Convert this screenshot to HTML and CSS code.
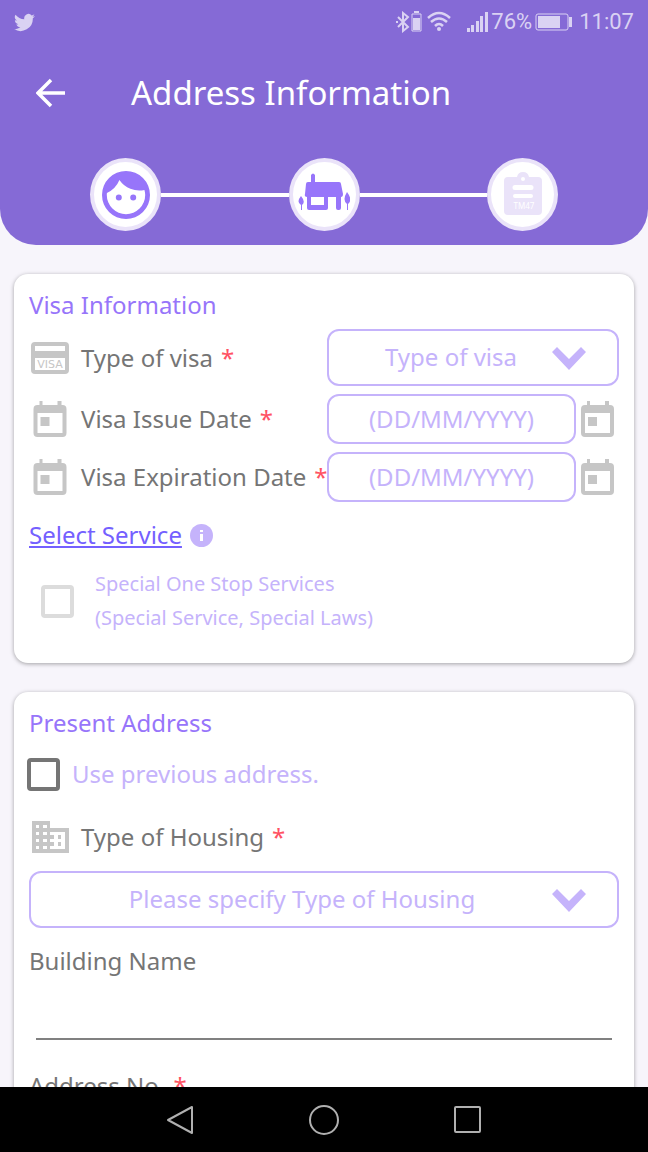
FILE: index.html
```html
<!DOCTYPE html>
<html lang="en">

<head>
    <meta charset="utf-8">
    <meta name="viewport" content="width=device-width, initial-scale=1">
    <title>Address Information</title>
    <link rel="stylesheet" href="styles.css">
</head>
<body>
    <!-- shared icons -->
    <svg class="sprite">
        <symbol id="calendar" viewBox="0 0 33 36">
            <path fill-rule="evenodd" d="M6 0h3v4h15V0h4v4h1q4 0 4 4v24q0 4-4 4H4q-4 0-4-4V8q0-4 4-4h2zM4 12v20h25V12zM7 16h9v9H7z"/>
        </symbol>
        <symbol id="arrow" viewBox="0 0 34 23">
            <path d="M5 0l12 12L29 0l5 5-17 18L0 5z"/>
        </symbol>
    </svg>

    <div class="screen">
        <header class="header">
            <div class="status">
                <svg class="twitter" viewBox="0 0 24 24"><path d="M24 4.6a10 10 0 0 1-2.8.8 5 5 0 0 0 2.1-2.7 10 10 0 0 1-3.1 1.2 4.9 4.9 0 0 0-8.4 4.5A14 14 0 0 1 1.700 3.200a4.900 4.900 0 0 0 1.500 6.500 4.900 4.900 0 0 1-2.200-.6 4.900 4.900 0 0 0 3.900 4.900 5 5 0 0 1-2.200.1 4.900 4.900 0 0 0 4.600 3.400A9.900 9.900 0 0 1 0 19.500a14 14 0 0 0 21.500-12.400A10 10 0 0 0 24 4.600z"/></svg>
                <div class="status-right">
                    <svg width="72" height="22" viewBox="0 0 72 22">
                        <g fill="none" stroke="currentColor" stroke-width="2">
                            <path d="M3 6l10 10-5 4V2l5 4L3 16"/>
                            <path d="M17 3h9v17h-9z" stroke-width="1"/>
                            <path d="M33 7q11-10 22 0M36 11q8-7 16 0M40 15q4-4 8 0" stroke-width="2.500"/>
                        </g>
                        <path d="M19 0h5v2h-5zM18 7h7v12h-7zM1 10h2v2H1z"/>
                        <circle cx="44" cy="18" r="2"/>
                    </svg>
                    <svg width="21" height="22" viewBox="0 0 21 22"><path d="M0 17h3v4H0zM4 14h3v7H4zM9 10h3v11H9zM13 5h3v16h-3zM18 1h3v20h-3z"/></svg>
                    <span class="percent">76%</span>
                    <svg class="battery" width="38" height="18" viewBox="0 0 38 18">
                        <rect x="1" y="1" width="32" height="16" rx="2" fill="none" stroke="currentColor"/>
                        <path d="M3 3h22v12H3zM34 4h3v10h-3z"/>
                    </svg>
                    <span>11:07</span>
                </div>
            </div>
            <div class="toolbar">
                <button class="back" aria-label="Back">
                    <svg width="30" height="30" viewBox="0 0 30 30"><path d="M29 15H3M15 2L2 15l13 13" fill="none" stroke="#fff" stroke-width="3.500"/></svg>
                </button>
                <h1>Address Information</h1>
            </div>
            <div class="steps">
                <div class="step">
                    <svg width="48" height="48" viewBox="2 2 20 20"><path d="M9 11.750a1.250 1.250 0 1 0 0 2.500 1.250 1.250 0 0 0 0-2.500zm6 0a1.250 1.250 0 1 0 0 2.500 1.250 1.250 0 0 0 0-2.500zM12 2a10 10 0 1 0 0 20 10 10 0 0 0 0-20zm0 18a8 8 0 0 1-8-8c0-.290.020-.580.050-.860a10.050 10.050 0 0 0 5.210-5.370A9.990 9.990 0 0 0 19.670 9.890c.210.670.330 1.370.330 2.110a8 8 0 0 1-8 8z"/></svg>
                </div>
                <div class="line"></div>
                <div class="step">
                    <svg width="52" height="43" viewBox="0 0 52 43">
                        <path fill-rule="evenodd" d="M13 2q2-3 4 0v7h24q2 0 2 2l2 10q0 3-2 3v11q0 2-2 2h-1q-2 0-2-2V24h-8v11q0 2-2 2H11q-2 0-2-2V24q-3 0-2-3l1-10q0-2 2-2h3zM13 24v8h13v-8z"/>
                        <path d="M3 23q5 6 1 9v5H3v-5q-5-3 0-9zM49 19q6 8 1 12v6h-1v-6q-5-4 0-12z"/>
                    </svg>
                </div>
                <div class="line"></div>
                <div class="step">
                    <svg class="tm" width="38" height="46" viewBox="0 0 38 46">
                        <path fill-rule="evenodd" d="M4 5h9q1-5 6-5t6 5h9q4 0 4 4v30q0 4-4 4H4q-4 0-4-4V9q0-4 4-4zM19 5a2 2 0 1 0 0 4 2 2 0 0 0 0-4zM11 13a2 2 0 0 0 0 5h16a2 2 0 0 0 0-5zM11 22a2 2 0 0 0 0 4h16a2 2 0 0 0 0-4z"/>
                        <text x="20" y="37" text-anchor="middle">TM47</text>
                    </svg>
                </div>
            </div>
        </header>

        <form class="content">
            <section class="card">
                <h2>Visa Information</h2>
                <div class="rows">
                    <div class="row">
                        <label for="visaType">
                            <svg class="icon" viewBox="-2 -2 42 36">
                                <path fill-rule="evenodd" d="M4 0h30q4 0 4 4v24q0 4-4 4H4q-4 0-4-4V4q0-4 4-4zM4 4v5h30V4zM4 16v12h30V16z"/>
                                <text x="19" y="26" text-anchor="middle">VISA</text>
                            </svg>
                            Type of visa <b>*</b>
                        </label>
                        <div class="select">
                            <select id="visaType"><option>Type of visa</option></select>
                            <svg><use href="#arrow"/></svg>
                        </div>
                    </div>
                    <div class="row">
                        <label for="issueDate"><svg class="icon"><use href="#calendar"/></svg>Visa Issue Date <b>*</b></label>
                        <div class="date">
                            <input type="text" id="issueDate" placeholder="(DD/MM/YYYY)">
                            <button type="button" aria-label="Pick issue date"><svg><use href="#calendar"/></svg></button>
                        </div>
                    </div>
                    <div class="row">
                        <label for="expDate"><svg class="icon"><use href="#calendar"/></svg>Visa Expiration Date <b>*</b></label>
                        <div class="date">
                            <input type="text" id="expDate" placeholder="(DD/MM/YYYY)">
                            <button type="button" aria-label="Pick expiration date"><svg><use href="#calendar"/></svg></button>
                        </div>
                    </div>
                </div>
                <div class="service">
                    <a href="#">Select Service</a>
                    <svg width="23" height="23" viewBox="0 0 23 23">
                        <circle cx="11.500" cy="11.500" r="11.500"/>
                        <path d="M10 6h3v2h-3zM10 10h3v7h-3z" fill="#fff"/>
                    </svg>
                </div>
                <label class="check special">
                    <input type="checkbox" disabled>
                    <span>Special One Stop Services<br>(Special Service, Special Laws)</span>
                </label>
            </section>

            <section class="card">
                <h2>Present Address</h2>
                <label class="check">
                    <input type="checkbox">
                    <span>Use previous address.</span>
                </label>
                <label class="housing" for="housing">
                    <svg class="icon" viewBox="-3 -2 42 36"><path fill-rule="evenodd" d="M0 0h18v7h19v25H0zM4 4v3h3V4zM11 4v3h4V4zM4 11v3h3v-3zM11 11v3h4v-3zM4 18v3h3v-3zM11 18v3h4v-3zM4 25v3h3v-3zM11 25v3h4v-3zM18 11v3h4v4h-4v3h4v4h-4v3h15V11zM26 14h3v4h-3zM26 21h3v4h-3z"/></svg>
                    Type of Housing <b>*</b>
                </label>
                <div class="select">
                    <select id="housing"><option>Please specify Type of Housing</option></select>
                    <svg><use href="#arrow"/></svg>
                </div>
                <label class="field" for="building">Building Name</label>
                <input class="line-input" type="text" id="building">
                <label class="field" for="addressNo">Address No. <b>*</b></label>
                <input class="line-input" type="text" id="addressNo">
            </section>
        </form>

        <nav class="navbar">
            <button aria-label="Back"><svg viewBox="0 0 30 30"><path d="M27 2v26L3 15z"/></svg></button>
            <button aria-label="Home"><svg viewBox="0 0 30 30"><circle cx="15" cy="15" r="14"/></svg></button>
            <button aria-label="Recent apps"><svg viewBox="0 0 30 30"><rect x="2" y="2" width="25" height="25" rx="1"/></svg></button>
        </nav>
    </div>
</body>

</html>
```
FILE: styles.css
```css
* {
    box-sizing: border-box;
}
body {
    margin: 0;
    background: #f7f5fb;
    color: #757575;
    font-family: "Noto Sans", sans-serif;
    font-size: 24px;
    line-height: 34px;
}
h1,
h2 {
    margin: 0;
    font-weight: normal;
}
button {
    padding: 0;
    border: 0;
    background: none;
}
svg {
    display: block;
    flex: none;
    fill: currentColor;
}
.sprite {
    position: absolute;
    width: 0;
    height: 0;
}
.screen {
    display: flex;
    flex-direction: column;
    height: 100vh;
}

/* header */
.header {
    flex: none;
    padding-bottom: 14px;
    background: #856ad6;
    border-radius: 0 0 36px 36px;
    color: #fff;
}
.status {
    display: flex;
    justify-content: space-between;
    align-items: center;
    height: 44px;
    padding: 0 14px;
    color: #dad2f3;
    font-family: Roboto, sans-serif;
    font-size: 22px;
}
.twitter {
    width: 21px;
    height: 21px;
}
.status-right {
    display: flex;
    align-items: center;
}
.percent {
    margin: 0 3px;
}
.battery {
    margin-right: 6px;
}
.toolbar {
    display: flex;
    align-items: center;
    gap: 65px;
    height: 98px;
    padding-left: 36px;
}
h1 {
    font-size: 33px;
}
.steps {
    display: flex;
    align-items: center;
    padding: 16px 90px 0;
}
.step {
    display: flex;
    justify-content: center;
    align-items: center;
    width: 71px;
    height: 73px;
    background: #fff;
    border: 4px solid #eae3f9;
    border-radius: 50%;
    color: #9775fa;
}
.line {
    flex: 1;
    height: 4px;
    background: #fff;
}
.tm {
    color: #eae3f9;
}
.tm text {
    fill: #fff;
    font-size: 8px;
}

/* cards */
.content {
    flex: 1;
    min-height: 0;
    overflow: hidden;
    padding: 29px 14px 0;
}
.card {
    margin-bottom: 29px;
    padding: 14px 15px 28px;
    background: #fff;
    border-radius: 14px;
    box-shadow: 0 1px 4px rgba(0, 0, 0, 0.35);
}
h2 {
    color: #9775fa;
    font-size: 24px;
}
b {
    margin-left: 2px;
    color: #ff5263;
    font-weight: normal;
}
.rows {
    display: grid;
    gap: 8px;
    margin-top: 7px;
}
.row {
    display: grid;
    grid-template-columns: minmax(0, 1fr) 292px;
    align-items: center;
}
.row label,
.housing {
    display: flex;
    align-items: center;
    gap: 6px;
    white-space: nowrap;
}
.icon {
    width: 42px;
    height: 36px;
    margin-right: 4px;
    color: #c6c6c6;
}
.icon text {
    font-family: "DejaVu Sans", sans-serif;
    font-size: 11px;
}
.select {
    position: relative;
}
.select svg {
    position: absolute;
    top: 18px;
    right: 33px;
    width: 34px;
    height: 23px;
    color: #c5b3fb;
    pointer-events: none;
}
select,
.date input {
    width: 100%;
    height: 57px;
    padding: 0 44px 2px 0;
    border: 2px solid #c5b3fb;
    border-radius: 12px;
    background: #fff;
    color: #c5b3fb;
    font: inherit;
    text-align: center;
    text-align-last: center;
    appearance: none;
}
.date {
    display: flex;
    align-items: center;
    gap: 5px;
    padding-right: 5px;
}
.date input {
    flex: 1;
    min-width: 0;
    height: 50px;
    padding: 0 0 2px;
}
.date input::placeholder {
    color: #c5b3fb;
}
.date svg {
    width: 33px;
    height: 36px;
    color: #c6c6c6;
}
.service {
    display: flex;
    align-items: center;
    gap: 8px;
    margin-top: 16px;
    color: #c5b3fb;
}
.service a {
    color: #7460ff;
}

/* checkboxes */
.check {
    display: flex;
    align-items: center;
    gap: 12px;
    margin: 17px 0 0 -2px;
    color: #c5b3fb;
}
.check input {
    width: 33px;
    height: 33px;
    margin: 0;
    border: 4px solid #757575;
    border-radius: 4px;
    appearance: none;
}
.check input:checked {
    background: #9775fa;
}
.special {
    gap: 21px;
    margin: 15px 0 0 12px;
    font-size: 20px;
}
.special input {
    border-color: #dcdcdc;
}

/* address */
.housing {
    margin: 28px 0 16px;
}
.field {
    display: block;
    margin-top: 16px;
}
.line-input {
    display: block;
    width: calc(100% - 14px);
    height: 62px;
    margin: 0 7px 29px;
    border: 0;
    border-bottom: 2px solid #808080;
    font: inherit;
}

/* android buttons */
.navbar {
    display: flex;
    flex: none;
    justify-content: center;
    align-items: center;
    gap: 114px;
    height: 65px;
    background: #000;
}
.navbar svg {
    width: 30px;
    height: 30px;
    fill: none;
    stroke: #b0b0b0;
    stroke-width: 2;
    stroke-linejoin: round;
}
```
